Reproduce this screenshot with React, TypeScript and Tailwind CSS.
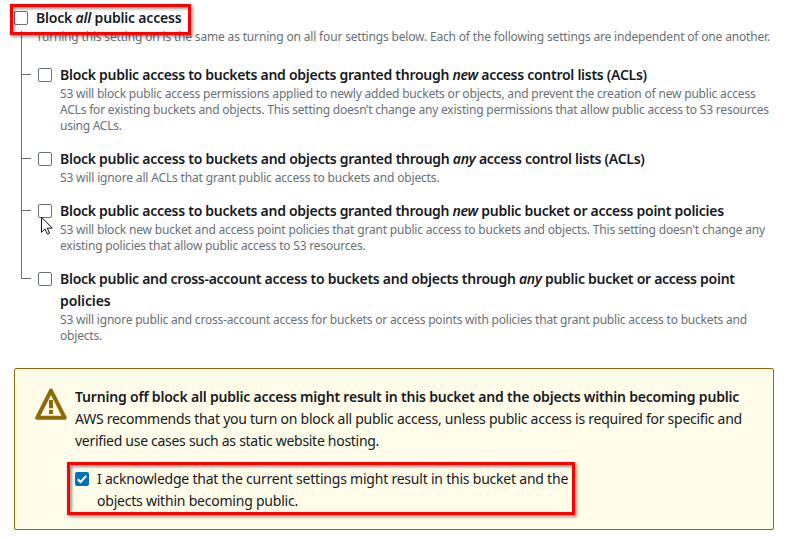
import type { ReactNode } from "react";

type TextLine = { text: ReactNode; tracking: string };

type Setting = {
  title: TextLine[];
  description: TextLine[];
};

const settings: Setting[] = [
  {
    title: [
      {
        text: (
          <>
            Block public access to buckets and objects granted through <em>new</em> access control lists (ACLs)
          </>
        ),
        tracking: "tracking-[-0.273px]",
      },
    ],
    description: [
      {
        text: "S3 will block public access permissions applied to newly added buckets or objects, and prevent the creation of new public access",
        tracking: "tracking-[-0.188px]",
      },
      {
        text: "ACLs for existing buckets and objects. This setting doesn’t change any existing permissions that allow public access to S3 resources",
        tracking: "tracking-[-0.2px]",
      },
      { text: "using ACLs.", tracking: "tracking-[-0.25px]" },
    ],
  },
  {
    title: [
      {
        text: (
          <>
            Block public access to buckets and objects granted through <em>any</em> access control lists (ACLs)
          </>
        ),
        tracking: "tracking-[-0.267px]",
      },
    ],
    description: [
      {
        text: "S3 will ignore all ACLs that grant public access to buckets and objects.",
        tracking: "tracking-[-0.157px]",
      },
    ],
  },
  {
    title: [
      {
        text: (
          <>
            Block public access to buckets and objects granted through <em>new</em> public bucket or access point
            policies
          </>
        ),
        tracking: "tracking-[-0.272px]",
      },
    ],
    description: [
      {
        text: "S3 will block new bucket and access point policies that grant public access to buckets and objects. This setting doesn't change any",
        tracking: "tracking-[-0.18px]",
      },
      {
        text: "existing policies that allow public access to S3 resources.",
        tracking: "tracking-[-0.197px]",
      },
    ],
  },
  {
    title: [
      {
        text: (
          <>
            Block public and cross-account access to buckets and objects through <em>any</em> public bucket or access
            point
          </>
        ),
        tracking: "tracking-[-0.276px]",
      },
      { text: "policies", tracking: "tracking-[-0.1px]" },
    ],
    description: [
      {
        text: "S3 will ignore public and cross-account access for buckets or access points with policies that grant public access to buckets and",
        tracking: "tracking-[-0.2px]",
      },
      { text: "objects.", tracking: "tracking-[-0.2px]" },
    ],
  },
];

function Lines({ lines }: { lines: TextLine[] }) {
  return (
    <>
      {lines.map((line, i) => (
        <span key={i} className={`block whitespace-nowrap ${line.tracking}`}>
          {line.text}
        </span>
      ))}
    </>
  );
}

function Checkbox({ checked = false }: { checked?: boolean }) {
  if (checked) {
    return (
      <span className="mt-1 block size-[14px] shrink-0 rounded-[2px] bg-[#0073bb]">
        <svg viewBox="0 0 14 14" className="size-[14px]" fill="none" stroke="#fff" strokeWidth="2">
          <path d="M2.8 7.2 5.6 10 11.2 3.8" />
        </svg>
      </span>
    );
  }
  return <span className="mt-1 block size-[14px] shrink-0 rounded-[2px] border border-[#687078] bg-white" />;
}

function WarningIcon() {
  return (
    <svg viewBox="0 0 32 32" className="mt-[2px] size-8 shrink-0" fill="none">
      <path d="M16 2.6 2.2 29.8h27.6Z" stroke="#906806" strokeWidth="4" strokeLinejoin="round" />
      <path d="M14 12h4v8.2h-4zM14 22h4v4h-4z" fill="#906806" />
    </svg>
  );
}

function Highlight({ className }: { className: string }) {
  return (
    <div
      className={`pointer-events-none absolute border-[3px] border-[#fe0000] shadow-[2px_2px_3px_rgba(0,0,0,0.4),inset_2px_2px_3px_rgba(0,0,0,0.4)] ${className}`}
    />
  );
}

function Cursor() {
  return (
    <svg viewBox="0 0 12 19" className="pointer-events-none absolute top-[148px] left-[3px] h-[19px] w-3">
      <path
        d="M.5 1.2v15.1l3.5-3.4 2.4 5.3 2.2-1-2.3-5.1h5Z"
        fill="#fff"
        stroke="#111"
        strokeWidth="1"
      />
    </svg>
  );
}

export default function App() {
  return (
    <main className="h-[540px] w-[792px] overflow-hidden bg-white pt-[7px] pl-[14px] font-['Noto_Sans',sans-serif] text-sm leading-[22px] text-[#16191f]">
      <section className="relative">
        <div className="flex gap-2">
          <Checkbox />
          <span className="font-semibold tracking-[-0.187px] whitespace-nowrap">
            Block <em>all</em> public access
          </span>
        </div>
        <div className="ml-[7px] flex h-[35px]">
          <div className="mt-[2px] w-[15px] border-l border-[#687078]" />
          <p className="text-xs leading-4 tracking-[-0.171px] whitespace-nowrap text-[#687078]">
            Turning this setting on is the same as turning on all four settings below. Each of the following settings
            are independent of one another.
          </p>
        </div>
        <Highlight className="-top-[3px] -left-1 h-[31px] w-[181px]" />
      </section>

      <ul className="relative ml-[7px]">
        {settings.map((setting, i) => {
          const last = i === settings.length - 1;
          return (
            <li key={i} className="flex">
              <div className="flex w-[10px] flex-col">
                <div className="h-[11px] border-b border-l border-[#687078]" />
                {!last && <div className="flex-1 border-l border-[#687078]" />}
              </div>
              <div className={last ? "ml-[7px] flex gap-2" : "ml-[7px] flex gap-2 pb-[14px]"}>
                <Checkbox />
                <div>
                  <h3 className="font-semibold">
                    <Lines lines={setting.title} />
                  </h3>
                  <p className="text-xs leading-4 text-[#687078]">
                    <Lines lines={setting.description} />
                  </p>
                </div>
              </div>
            </li>
          );
        })}
        <li aria-hidden className="absolute top-1 left-[17px]">
          <Cursor />
        </li>
      </ul>

      <section className="mt-6 flex h-[162px] w-[760px] gap-2 rounded-[2px] border border-[#906806] bg-[#fffce9] pt-[17px] pl-5">
        <WarningIcon />
        <div>
          <h2 className="font-semibold tracking-[-0.196px] whitespace-nowrap">
            Turning off block all public access might result in this bucket and the objects within becoming public
          </h2>
          <p>
            <Lines
              lines={[
                {
                  text: "AWS recommends that you turn on block all public access, unless public access is required for specific and",
                  tracking: "tracking-[-0.255px]",
                },
                { text: "verified use cases such as static website hosting.", tracking: "tracking-[-0.29px]" },
              ]}
            />
          </p>
          <div className="relative mt-4 flex gap-2">
            <Checkbox checked />
            <p>
              <Lines
                lines={[
                  {
                    text: "I acknowledge that the current settings might result in this bucket and the",
                    tracking: "tracking-[-0.22px]",
                  },
                  { text: "objects within becoming public.", tracking: "tracking-[-0.22px]" },
                ]}
              />
            </p>
            <Highlight className="-top-[6px] -left-2 h-[53px] w-[508px]" />
          </div>
        </div>
      </section>
    </main>
  );
}
